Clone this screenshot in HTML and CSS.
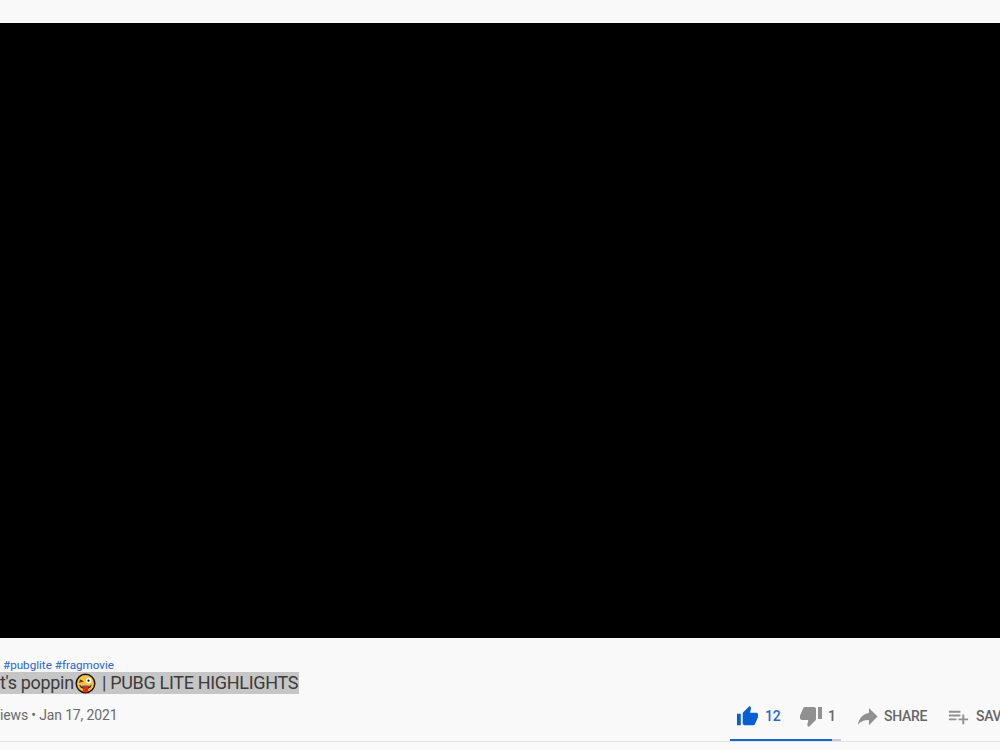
FILE: index.html
```
<!DOCTYPE html>
<html lang="en">
<head>
    <meta charset="UTF-8">
    <meta name="viewport" content="width=device-width, initial-scale=1.0">
    <title>PUBG LITE HIGHLIGHTS</title>
    <link rel="stylesheet" href="styles.css">
</head>
<body>
    <div class="player"></div>

    <div class="info">
        <div class="hashtags"><a>#pubglite</a> <a>#fragmovie</a></div>
        <h1 class="title"><span class="selected">t's poppin<svg class="emoji" viewBox="0 0 22 22">
            <circle cx="11" cy="11" r="9.7" fill="#ffc03d" stroke="#171510" stroke-width="1.6"/>
            <path d="M4.200 9.800L7.800 8.600L5 7.200" fill="none" stroke="#3b2417" stroke-width="1.1"/>
            <circle cx="14.200" cy="8" r="2.900" fill="#fff"/>
            <circle cx="14.200" cy="8" r="1.200" fill="#171510"/>
            <path d="M4.500 12.200C8 13.500 14 13.500 17.500 12.200C17 15.300 14.800 16.600 11 16.600S5 15.300 4.500 12.200z" fill="#3b2417"/>
            <path d="M5.800 12.800C9 13.700 13 13.700 16.200 12.800L15.700 13.900H6.300z" fill="#fff"/>
            <path d="M8.300 14H13.700V18.500Q13.700 20.700 11 20.700T8.300 18.500z" fill="#e8281c"/>
        </svg> | PUBG LITE HIGHLIGHTS</span></h1>

        <div class="meta">
            <div class="views">iews • Jan 17, 2021</div>
            <div class="actions">
                <!-- like / dislike with ratio bar -->
                <div class="rating">
                    <button class="action like">
                        <svg viewBox="0 0 24 24"><path d="M1 21h4V9H1v12zm22-11c0-1.100-.9-2-2-2h-6.310l.95-4.570.03-.32c0-.41-.17-.79-.44-1.060L14.170 1 7.590 7.590C7.220 7.950 7 8.450 7 9v10c0 1.100.9 2 2 2h9c.83 0 1.540-.5 1.840-1.220l3.020-7.050c.09-.23.14-.47.14-.73v-2z"/></svg>
                        <span>12</span>
                    </button>
                    <button class="action dislike">
                        <svg viewBox="0 0 24 24"><path d="M15 3H6c-.83 0-1.540.5-1.840 1.220l-3.020 7.050c-.09.23-.14.47-.14.73v2c0 1.100.9 2 2 2h6.310l-.95 4.570-.03.32c0 .41.17.79.44 1.060L9.830 23l6.590-6.590c.36-.36.58-.86.58-1.410V5c0-1.100-.9-2-2-2zm4 0v12h4V3h-4z"/></svg>
                        <span>1</span>
                    </button>
                    <div class="ratio"><div class="ratio-likes"></div></div>
                </div>
                <button class="action share">
                    <svg viewBox="0 0 24 24"><path d="M13.500 3L22.500 12l-9 9v-5.300C8.500 15.700 5 17 2 20.500C3 14.500 6.500 9.400 13.500 8.300z"/></svg>
                    <span>SHARE</span>
                </button>
                <button class="action save">
                    <svg viewBox="0 0 24 24"><path d="M14 10H2v2h12v-2zm0-4H2v2h12V6zm4 8v-4h-2v4h-4v2h4v4h2v-4h4v-2h-4zM2 16h8v-2H2v2z"/></svg>
                    <span>SAVE</span>
                </button>
            </div>
        </div>
    </div>
</body>
</html>
```
FILE: styles.css
```
body {
    margin: 0;
    padding-top: 23px;
    height: 727px;
    background-color: #f9f9f9;
    font-family: Roboto, sans-serif;
    overflow: hidden;
}
.player {
    height: 615px;
    background-color: #000;
}
.info {
    height: 104px;
    padding-top: 19px;
    box-sizing: border-box;
    border-bottom: 1px solid #e2e2e2;
}
.hashtags {
    height: 15px;
    padding-left: 3px;
    font-size: 11.65px;
    line-height: 17px;
    color: #2b66cc;
    white-space: nowrap;
}
.title {
    display: flex;
    margin: 0;
    font-size: 18px;
    letter-spacing: -0.32px;
    font-weight: 400;
    line-height: 22px;
    color: #3c3c3c;
}
.selected {
    height: 22px;
    padding-right: 1px;
    background-color: #c6c6c6;
    white-space: nowrap;
}
.emoji {
    width: 21px;
    height: 21px;
    margin: 0 2px 0 1px;
    vertical-align: -5px;
}
.meta {
    display: flex;
    justify-content: space-between;
    height: 47px;
}
.views {
    padding-top: 10px;
    font-size: 14px;
    letter-spacing: -0.15px;
    line-height: 22px;
    color: #6b6b6b;
}
.actions {
    display: flex;
    flex: none;
    width: 270px;
}
.rating {
    position: relative;
    display: flex;
    flex: none;
    width: 111px;
    margin-right: 15px;
}
.action {
    display: flex;
    align-items: center;
    flex: none;
    height: 24px;
    margin-top: 10px;
    padding: 0;
    border: none;
    background: none;
    font-family: inherit;
    font-size: 14px;
    letter-spacing: -0.3px;
    font-weight: 500;
    color: #666;
    cursor: pointer;
}
.action svg {
    width: 23px;
    height: 23px;
    margin-right: 6px;
    fill: #909090;
}
.like {
    width: 63px;
    padding-left: 6px;
    box-sizing: border-box;
    color: #2b66cc;
    margin-right: 6px;
}
.like svg {
    fill: #065fd4;
}
.dislike svg {
    width: 24px;
    height: 24px;
    margin-right: 5px;
}
.share {
    width: 91px;
}
.share svg {
    margin-right: 5px;
}
/* sits over the divider */
.ratio {
    position: absolute;
    left: 0;
    bottom: 0;
    width: 111px;
    height: 2px;
    background-color: #ccc;
}
.ratio-likes {
    width: 102px;
    height: 2px;
    background-color: #1668c8;
}
```
